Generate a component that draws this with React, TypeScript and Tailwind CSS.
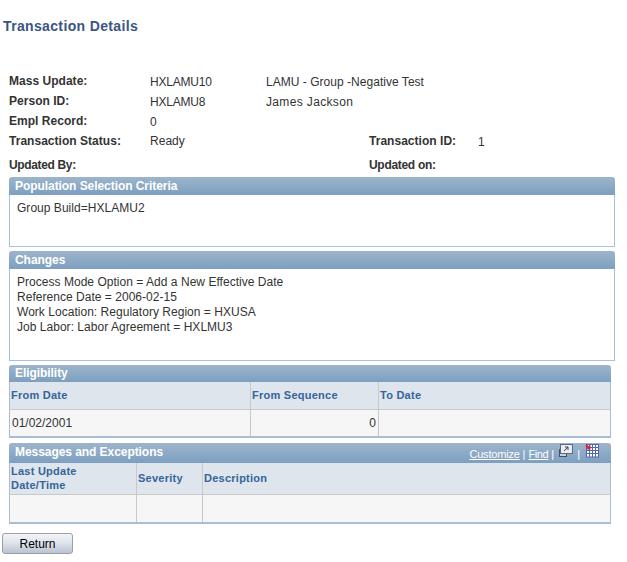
import React from "react";

const font = "font-['Liberation_Sans',Arial,sans-serif]";

const Header = ({ title, height, children }: { title: string; height: string; children?: React.ReactNode }) => (
  <div className={`flex items-center justify-between rounded-t-[3px] bg-gradient-to-b from-[#9db5cb] to-[#7d9fc0] pl-[6px] text-[12px] font-bold tracking-[-0.06px] text-white ${height}`}>
    <span>{title}</span>
    {children}
  </div>
);

const TextPanel = ({ title, lines, bodyHeight }: { title: string; lines: string[]; bodyHeight: string }) => (
  <section className="w-[606px]">
    <Header title={title} height="h-[18px]" />
    <div className={`border border-t-0 border-[#a6c3de] bg-white px-[7px] pt-[6px] text-[12px] leading-[15px] tracking-[0.03px] text-[#333] ${bodyHeight}`}>
      {lines.map((line) => (
        <div key={line}>{line}</div>
      ))}
    </div>
  </section>
);

const th = "border-r border-b border-[#c9c9c9] bg-[#dee5ec] px-[1px] text-left align-middle text-[11px] font-bold leading-[14px] tracking-[0.25px] text-[#35649a]";
const td = "border-r border-[#c9c9c9] bg-[#f6f6f6] px-[2px] text-[12px] text-[#333]";

export default function App() {
  return (
    <div className={`${font} h-[562px] w-[627px] overflow-hidden bg-white`}>
      <h1 className="pl-[3px] pt-[18px] text-[14px] font-bold leading-[16px] tracking-[0.35px] text-[#3a5586]">Transaction Details</h1>

      <div className="ml-[9px] mt-[40px] grid grid-cols-[141px_116px_103px_109px_1fr] text-[12px] tracking-[0.03px] text-[#333]">
        <div className="h-[20px] font-bold leading-[14px]">Mass Update:</div>
        <div className="leading-[16px] tracking-[-0.2px]">HXLAMU10</div>
        <div className="col-span-3 leading-[16px]">LAMU - Group -Negative Test</div>

        <div className="h-[20px] font-bold leading-[14px]">Person ID:</div>
        <div className="leading-[16px] tracking-[-0.2px]">HXLAMU8</div>
        <div className="col-span-3 leading-[16px] tracking-[0.35px]">James Jackson</div>

        <div className="h-[20px] font-bold leading-[14px]">Empl Record:</div>
        <div className="col-span-4 leading-[16px]">0</div>

        <div className="h-[24px] font-bold leading-[14px]">Transaction Status:</div>
        <div className="col-span-2 leading-[14px]">Ready</div>
        <div className="font-bold leading-[14px]">Transaction ID:</div>
        <div className="leading-[16px]">1</div>

        <div className="col-span-3 h-[19px] font-bold leading-[14px] tracking-[-0.35px]">Updated By:</div>
        <div className="col-span-2 font-bold leading-[14px] tracking-[-0.3px]">Updated on:</div>
      </div>

      <div className="ml-[9px] flex flex-col gap-[4px]">
        <TextPanel title="Population Selection Criteria" lines={["Group Build=HXLAMU2"]} bodyHeight="h-[52px]" />
        <TextPanel
          title="Changes"
          lines={[
            "Process Mode Option = Add a New Effective Date",
            "Reference Date = 2006-02-15",
            "Work Location: Regulatory Region = HXUSA",
            "Job Labor: Labor Agreement = HXLMU3",
          ]}
          bodyHeight="h-[92px]"
        />

        <section className="w-[602px]">
          <Header title="Eligibility" height="h-[17px] pb-[1px]" />
          <table className="w-full table-fixed border-collapse border-x border-b-2 border-[#a9bed4]">
            <colgroup>
              <col className="w-[241px]" />
              <col className="w-[128px]" />
              <col />
            </colgroup>
            <thead>
              <tr className="h-[27px]">
                <th className={th}>From Date</th>
                <th className={th}>From Sequence</th>
                <th className={`${th} border-r-0`}>To Date</th>
              </tr>
            </thead>
            <tbody>
              <tr className="h-[28px]">
                <td className={td}>01/02/2001</td>
                <td className={`${td} text-right`}>0</td>
                <td className={`${td} border-r-0`}></td>
              </tr>
            </tbody>
          </table>
        </section>

        <section className="mt-[1px] w-[602px]">
          <Header title="Messages and Exceptions" height="h-[20px] pb-[2px]">
            <div className="mt-[4px] flex items-center gap-[3px] pr-[12px] text-[11px] font-normal tracking-normal">
              <a className="tracking-[-0.2px] underline">Customize</a>
              <span>|</span>
              <a className="tracking-[-0.4px] underline">Find</a>
              <span className="mr-[1px]">|</span>
              <svg width="15" height="14" viewBox="0 0 15 14" className="-mt-[7px]">
                <rect x="1.5" y="5.5" width="7" height="7" fill="#c9d3df" stroke="#4a4f57" />
                <rect x="2.5" y="0.5" width="12" height="9" fill="#e9edf2" stroke="#5a6a80" />
                <path d="M6 7l4-4M7 3h3v3" stroke="#3c4048" fill="none" />
              </svg>
              <span className="ml-[1px] mr-[2px]">|</span>
              <svg width="14" height="14" viewBox="0 0 14 14" className="-mt-[7px]">
                <rect x="1.5" y="0.5" width="12" height="12.5" fill="#fff" stroke="#5566b0" />
                <path d="M1 3.5h13M1 6.5h13M1 9.5h13M4.5 0v13M7.5 0v13M10.5 0v13" stroke="#5566b0" />
                <path d="M1 1l3 3" stroke="#d8232a" strokeWidth="2" fill="none" />
                <path d="M5.5 1v4.5H1z" fill="#d8232a" />
              </svg>
            </div>
          </Header>
          <table className="w-full table-fixed border-collapse border-x border-b-2 border-[#a9bed4]">
            <colgroup>
              <col className="w-[127px]" />
              <col className="w-[66px]" />
              <col />
            </colgroup>
            <thead>
              <tr className="h-[31px]">
                <th className={th}>
                  Last Update
                  <br />
                  Date/Time
                </th>
                <th className={th}>Severity</th>
                <th className={`${th} border-r-0`}>Description</th>
              </tr>
            </thead>
            <tbody>
              <tr className="h-[29px]">
                <td className={td}></td>
                <td className={td}></td>
                <td className={`${td} border-r-0`}></td>
              </tr>
            </tbody>
          </table>
        </section>
      </div>

      <button className="ml-[2px] mt-[9px] h-[21px] w-[71px] rounded-[3px] border border-[#9a9fa8] bg-gradient-to-b from-[#f3f5f8] via-[#dde2ea] to-[#b9c3d3] text-[12px] text-black">
        Return
      </button>
    </div>
  );
}
